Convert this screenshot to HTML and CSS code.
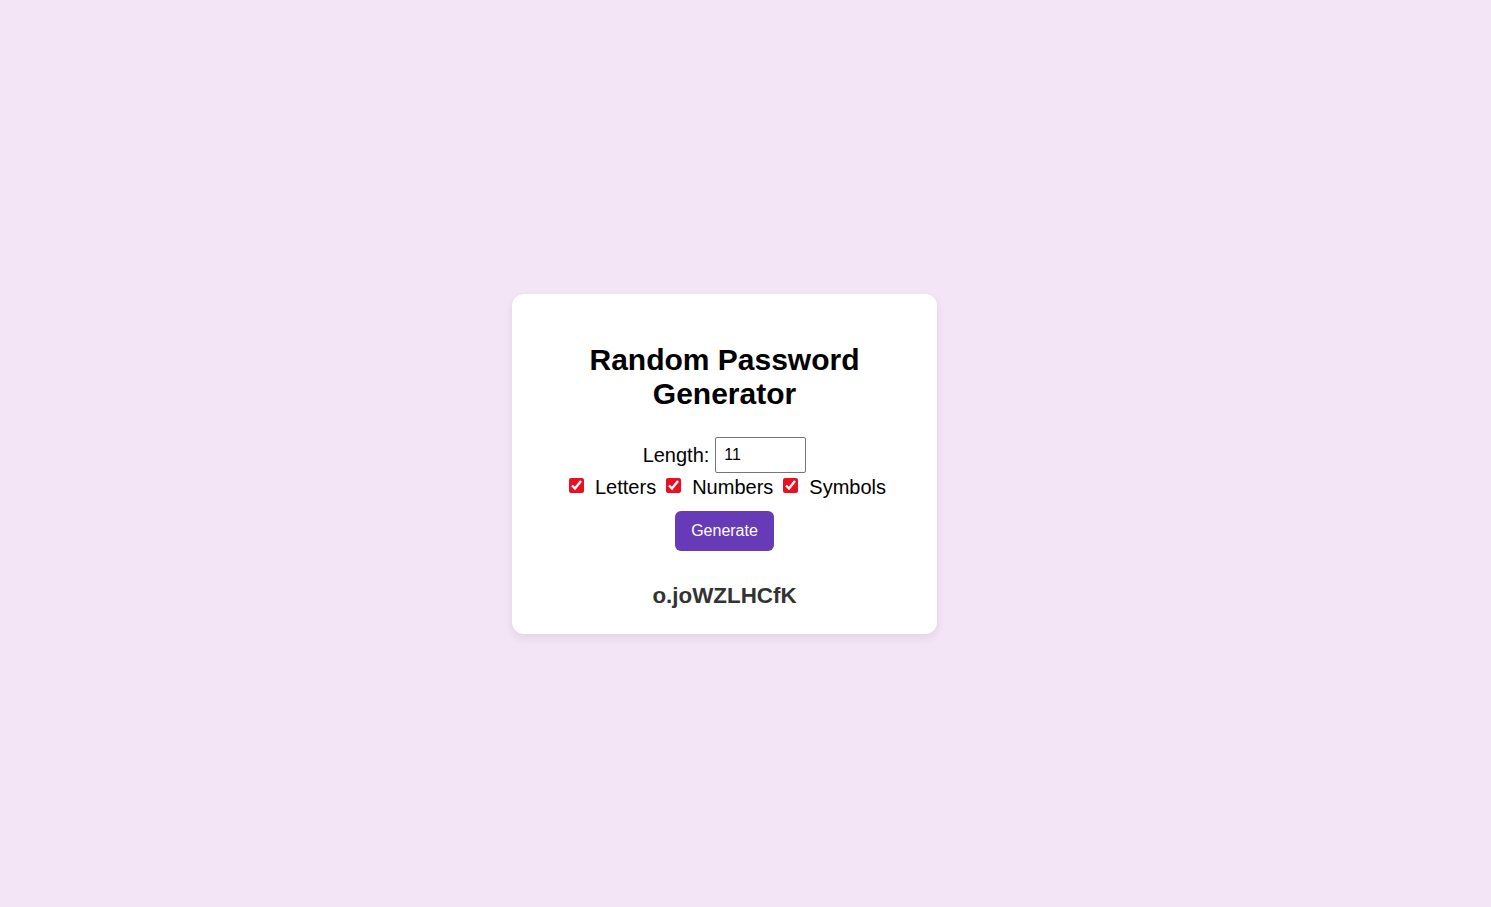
FILE: index.html
```html
<!DOCTYPE html>
<html lang="en">
<head>
<meta charset="utf-8">
<title>Random Password Generator</title>
<link rel="stylesheet" href="styles.css">
</head>
<body>
  <div class="card">
    <h1 class="title">Random Password Generator</h1>
    <div class="length-row">
      <label for="length" class="length-label">Length:</label>
      <input id="length" class="length-input" type="number" value="11">
    </div>
    <div class="options">
      <input type="checkbox" class="opt-box" id="letters" checked>
      <label for="letters" class="opt-label">Letters</label>
      <input type="checkbox" class="opt-box" id="numbers" checked>
      <label for="numbers" class="opt-label">Numbers</label>
      <input type="checkbox" class="opt-box" id="symbols" checked>
      <label for="symbols" class="opt-label">Symbols</label>
    </div>
    <button class="generate" type="button">Generate</button>
    <div class="password">o.joWZLHCfK</div>
  </div>
</body>
</html>
```
FILE: styles.css
```css
* { box-sizing: border-box; }
html, body { margin: 0; padding: 0; }
body {
  background: #f3e5f5;
  font-family: "Liberation Sans", Arial, sans-serif;
  min-height: 100vh;
  display: flex;
  align-items: center;
  justify-content: center;
  padding: 21px 42px 0 0;
}
.card {
  background: #fff;
  width: 425px;
  padding: 30px 30px 25px;
  border-radius: 12px;
  box-shadow: 0 4px 10px rgba(0, 0, 0, 0.08);
  display: flex;
  flex-direction: column;
  align-items: center;
  text-align: center;
}
.title {
  font-size: 30px;
  font-weight: bold;
  line-height: 34px;
  margin: 19px 0 26px;
  color: #000;
}
.length-row {
  display: flex;
  align-items: center;
  justify-content: center;
  gap: 6px;
  font-size: 20px;
}
.length-input {
  width: 91px;
  height: 36px;
  padding: 8px;
  font-family: "Liberation Sans", Arial, sans-serif;
  font-size: 16px;
  border: 1px solid #767676;
  border-radius: 2px;
  color: #000;
  -moz-appearance: textfield;
}
.length-input::-webkit-inner-spin-button,
.length-input::-webkit-outer-spin-button { -webkit-appearance: none; margin: 0; }
.options {
  display: flex;
  align-items: center;
  justify-content: center;
  font-size: 20px;
  line-height: 23px;
  margin-top: 3px;
  padding-left: 6px;
}
.opt-box {
  margin: 0 11px 4px 10px;
  width: 15px;
  height: 15px;
  accent-color: #e81123;
}
.opt-box:first-child { margin-left: 0; }
.generate {
  margin-top: 12px;
  height: 40px;
  padding: 0 16px;
  background: #673ab7;
  color: #fff;
  border: none;
  border-radius: 6px;
  font-family: "Liberation Sans", Arial, sans-serif;
  font-size: 16px;
}
.password {
  margin-top: 31.7px;
  font-size: 22.4px;
  line-height: 25.8px;
  font-weight: bold;
  color: #333;
}
```
